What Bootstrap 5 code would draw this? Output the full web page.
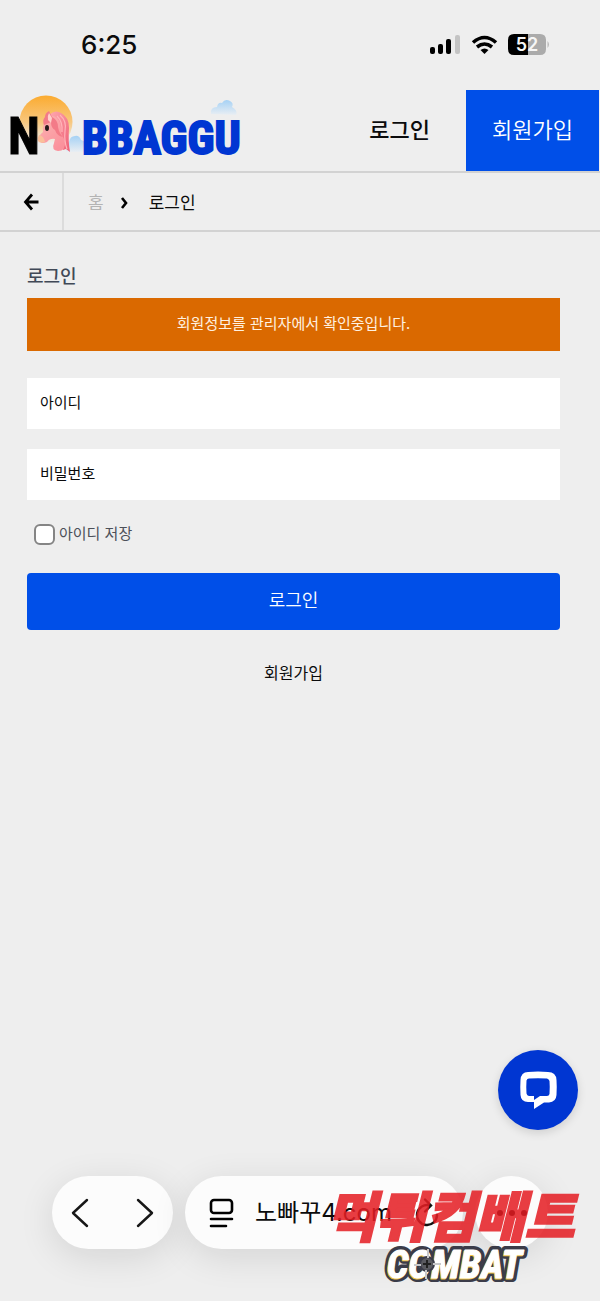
<!DOCTYPE html>
<html lang="ko">
<head>
<meta charset="utf-8">
<meta name="viewport" content="width=device-width, initial-scale=1">
<title>로그인</title>
<link href="https://cdn.jsdelivr.net/npm/bootstrap@5.3.0/dist/css/bootstrap.min.css" rel="stylesheet">
<style>
  :root { --ink: #0b0b0c; --blue: #004fe8; --deep: #0036d2; --line: #d2d2d2; }
  body { background: #eee; color: var(--ink); font-family: "Noto Sans CJK KR", sans-serif; }
  a { color: inherit; text-decoration: none; }
  svg { display: block; overflow: visible; }
  .status-bar { height: 90px; padding: 0 50px 0 81px; }
  .clock { font: 500 26px/32px Inter, sans-serif; }
  .site-head { height: 83px; border-bottom: 2px solid var(--line); padding: 0 1px 0 8px; }
  .head-link, .head-join { font-size: 22px; padding-bottom: 4px; }
  .head-link { font-weight: 500; padding-left: 36px; padding-right: 36px; }
  .head-join { width: 133px; background: var(--blue); color: #fff; font-weight: 350; }
  .crumbs { height: 59px; border-bottom: 2px solid var(--line); font-size: 17px; }
  .crumb-back { width: 64px; border-right: 2px solid #dcdcdc; }
  .crumb-home { color: #b4b4b4; }
  .page-body { padding: 28px 40px 0 27px; }
  .page-title { font-size: 18px; line-height: 30px; font-weight: 500; color: #414957; margin: 0 0 8px; }
  .notice { background: #da6900; color: #fff1e0; font-size: 15px; line-height: 21px; padding: 14px 16px 18px; margin-bottom: 27px; border: 0; border-radius: 0; }
  .field { height: 51px; background: #fff; font-size: 15px; padding: 0 13px 2px; margin-bottom: 20px; }
  .field input { min-width: 0; border: 0; outline: 0; background: none; }
  .field:focus-within { box-shadow: inset 0 0 0 2px var(--blue); }
  .save-row { padding-left: 7px; margin: 22px 0 26px; color: #4c5059; font-size: 15px; line-height: 22px; }
  .save-row label { padding-bottom: 3px; }
  .save-row .form-check-input { width: 21px; height: 21px; border: 2px solid #858585; border-radius: 6px; margin: 0; }
  .btn-login { background: var(--blue); color: #fff; height: 57px; border: 0; border-radius: 4px; font-size: 18px; font-weight: 350; padding: 0 0 4px; }
  .btn-login:hover { background: var(--deep); color: #fff; }
  .join-link { font-size: 16px; line-height: 24px; margin-top: 30px; }
  .bare { border: 0; background: none; padding: 0; }
  .chat-button { width: 80px; height: 80px; background: var(--deep); margin: 0 22px 46px auto; box-shadow: 0 3px 10px #0002; }
  .browser-bar { padding: 0 52px 52px; gap: 12px; }
  .glass { height: 73px; background: #fcfcfc; border-radius: 37px; box-shadow: 0 8px 36px #0000001c; }
  .glass-nav { width: 121px; }
  .glass-more { width: 73px; }
  .address { font: 400 24px/32px Inter, "Noto Sans CJK KR", sans-serif; }
  .stamp { right: 10px; top: 4px; pointer-events: none; }
</style>
</head>
<body>
<div class="d-flex flex-column min-vh-100">
  <div class="status-bar d-flex align-items-center justify-content-between">
    <span class="clock">6:25</span>
    <svg width="120" height="24" viewBox="0 0 120 24" role="img" aria-label="신호, 와이파이, 배터리 52%">
      <rect x="0" y="14" width="5" height="7" rx="2"/><rect x="8" y="11" width="5" height="10" rx="2"/><rect x="16" y="6" width="5" height="15" rx="2"/><rect x="25" y="2" width="5" height="19" rx="2" fill="#c4c4c4"/>
      <g fill="none" stroke="#000" stroke-width="3.6"><path d="M43 9.500q11.500-10 23 0M47 14q7.500-6 15 0"/></g>
      <path d="M50.500 17q4-3 8 0l-4 4z"/>
      <path d="M84 1h14v21H84q-6 0-6-6V7q0-6 6-6z"/><path d="M98 1h12q6 0 6 6v9q0 6-6 6H98z" fill="#ababab"/><path d="M117.500 8q3 3.500 0 7z" fill="#b8b8b8"/>
      <text x="97" y="18" text-anchor="middle" font-family="Inter, sans-serif" font-weight="600" font-size="18" fill="#f6f6f6">52</text>
    </svg>
  </div>

  <header class="site-head d-flex align-items-stretch">
    <a href="#" class="me-auto align-self-center" aria-label="NOBBAGGU">
      <svg width="232" height="72" viewBox="0 0 232 72">
        <defs>
          <linearGradient id="sun" x2="0" y2="1"><stop offset="0" stop-color="#fbab30"/><stop offset=".5" stop-color="#f8c77e"/><stop offset=".9" stop-color="#eee"/></linearGradient>
          <linearGradient id="cloud" x2="0" y2="1"><stop offset="0" stop-color="#a5d1f5"/><stop offset="1" stop-color="#e9eef3"/></linearGradient>
          <linearGradient id="mane" x2="1" y2="1"><stop offset="0" stop-color="#ffa9af"/><stop offset="1" stop-color="#ee5f76"/></linearGradient>
          <linearGradient id="face" x2=".6" y2="1"><stop offset="0" stop-color="#fbb5b2"/><stop offset="1" stop-color="#fb919c"/></linearGradient>
        </defs>
        <circle cx="38" cy="27" r="26.500" fill="url(#sun)"/>
        <path d="M58 57q-1-8 3-10 1-6 6-6 4-1 6 4 7 1 5 12z" fill="url(#cloud)"/>
        <path d="M203 19q-1-7 6-7 1-5 5-4 3-5 8-2 4 2 2 6 6 3 4 8z" fill="url(#cloud)"/>
        <path d="M41 20q6-6 12-2 8 4 8 15-1 13 1 24l-4-3-3 1-3-14-7-16z" fill="url(#mane)"/>
        <path d="M40 23q4-4 9 0 5 5 4 15l4 8q1 10-7 10-7-1-4-8l1-4q-5-1-8 3-7 3-8-3-1-3 4-7-1-9 5-14z" fill="url(#face)"/>
        <path d="M37 22q0-4 4-6l3 6q6 3 6 10 1 6 5 10-6-1-8-7-4-2-4-8l-7 3q-2-5 1-8z" fill="#f37b88"/>
        <path d="M40 25q-1-4 1-7l3 5-1 5z" fill="#ffd0cb"/>
        <path d="M52 20q7 6 5 16-1 10 2 18M49 21q6 6 5 16" fill="none" stroke="#ffb3b8" stroke-width="1.200"/>
        <path d="M31 40q5 1 6 7-5 2-7-1-1-3 1-6z" fill="#fac09a"/>
        <ellipse cx="39" cy="33" rx="2" ry="3" fill="#26191b"/>
        <g font-family="'Roboto Condensed', 'Liberation Sans Narrow', 'Liberation Sans', sans-serif" font-weight="700" paint-order="stroke">
          <text x="0" y="59" font-size="52" fill="#000" stroke="#000" stroke-width="1">N</text>
          <text x="74" y="59" font-size="46" fill="#0036d2" stroke="#0036d2" stroke-width="2">BBAGGU</text>
        </g>
      </svg>
    </a>
    <a href="#" class="head-link d-flex align-items-center">로그인</a>
    <a href="#" class="head-join d-flex align-items-center justify-content-center">회원가입</a>
  </header>

  <nav class="crumbs d-flex align-items-stretch" aria-label="이동 경로">
    <a href="#" class="crumb-back d-flex align-items-center justify-content-center" aria-label="뒤로">
      <svg width="16" height="18" viewBox="0 0 16 18" fill="none" stroke="#000" stroke-width="2.800"><path d="M9 1.500L2.500 9 9 16.500M2.500 9H15.500"/></svg>
    </a>
    <div class="d-flex align-items-center gap-3 ps-4">
      <a href="#" class="crumb-home">홈</a>
      <svg width="9" height="14" viewBox="0 0 9 14" fill="none" stroke="#000" stroke-width="2.600"><path d="M2 3l4 5-4 5"/></svg>
      <span class="ms-1">로그인</span>
    </div>
  </nav>

  <main class="page-body flex-grow-1">
    <h1 class="page-title">로그인</h1>
    <form>
      <div class="notice alert text-center" role="alert">회원정보를 관리자에서 확인중입니다.</div>
      <div class="field d-flex align-items-center gap-2">
        <label for="uid">아이디</label>
        <input class="flex-grow-1" id="uid" type="text">
      </div>
      <div class="field d-flex align-items-center gap-2">
        <label for="upw">비밀번호</label>
        <input class="flex-grow-1" id="upw" type="password">
      </div>
      <div class="save-row d-flex align-items-center gap-1">
        <input class="form-check-input" id="save" type="checkbox">
        <label for="save">아이디 저장</label>
      </div>
      <button class="btn btn-login w-100" type="button">로그인</button>
      <div class="join-link text-center"><a href="#">회원가입</a></div>
    </form>
  </main>

  <button class="bare chat-button rounded-circle d-flex align-items-center justify-content-center" type="button" aria-label="채팅">
    <svg width="38" height="40" viewBox="0 0 38 40"><path fill="#fff" fill-rule="evenodd" d="M9 2Q19 1 29 2q8 0 8.500 8 .5 7 0 15-.5 7-7.500 7.500h-5L15 39v-7H9q-7 0-7.500-7-.5-8 0-15Q2 2 9 2zM10 8.500q-2 0-2.500 2-.5 7 0 13 .5 2 2.500 2.500h5v4l6-4h7q2 0 2.500-2 .5-7 0-13-.5-2-2.500-2.500-9-.5-18 0z"/></svg>
  </button>

  <footer class="browser-bar position-relative d-flex">
    <div class="glass glass-nav d-flex align-items-center justify-content-between px-3">
      <button class="bare" type="button" aria-label="이전"><svg width="24" height="30" viewBox="0 0 24 30" fill="none" stroke="#171717" stroke-width="2.400" stroke-linecap="round" stroke-linejoin="round"><path d="M19 2L5 15l14 13"/></svg></button>
      <button class="bare" type="button" aria-label="다음"><svg width="24" height="30" viewBox="0 0 24 30" fill="none" stroke="#171717" stroke-width="2.400" stroke-linecap="round" stroke-linejoin="round"><path d="M5 2l14 13L5 28"/></svg></button>
    </div>
    <div class="glass flex-grow-1 d-flex align-items-center px-4">
      <svg width="26" height="30" viewBox="0 0 26 30" fill="none" stroke="#000" stroke-width="2.600" stroke-linecap="round"><rect x="2" y="2" width="21" height="13" rx="3"/><path d="M2 21h21M2 28h15"/></svg>
      <span class="address ms-3 ps-1 me-auto">노빠꾸4.com</span>
      <button class="bare" type="button" aria-label="새로고침"><svg width="24" height="30" viewBox="0 0 24 30" fill="none" stroke="#111" stroke-width="2.400" stroke-linecap="round"><path d="M15 7.500A10 10 0 1 0 22 17M10 1.500l6 6-6 6"/></svg></button>
    </div>
    <button class="bare glass glass-more d-flex align-items-center justify-content-center" type="button" aria-label="더보기">
      <svg width="32" height="8" viewBox="0 0 32 8"><circle cx="4" cy="4" r="3"/><circle cx="16" cy="4" r="3"/><circle cx="28" cy="4" r="3"/></svg>
    </button>
    <svg class="stamp position-absolute" width="270" height="110" viewBox="0 0 270 110">
      <g font-style="italic">
        <text x="6" y="57" font-size="54" font-weight="900" font-family="'Noto Sans CJK KR', sans-serif" fill="#e51e24" stroke="#e51e24" stroke-width="2" opacity=".86">먹튀컴배트</text>
        <g font-family="'Roboto Condensed', 'Liberation Sans', sans-serif" font-weight="700" font-size="39" paint-order="stroke" stroke-linejoin="round">
          <text x="67" y="98" fill="#3b3c49" stroke="#3b3c49" stroke-width="8">COMBAT</text>
          <text x="66" y="99" fill="#f2c23b" stroke="#f2c23b" stroke-width="1">COMBAT</text>
          <text x="67" y="98" fill="#fff" stroke="#fff" stroke-width="1">COMBAT</text>
        </g>
      </g>
      <g fill="none" stroke-width="2"><circle cx="107" cy="84" r="7" fill="#5a5a60" stroke="#3b3c49"/><path d="M108 69v9M106 90v9M94 85h7M113 84h8" stroke="#c8c8ca"/><path d="M107 80v8M103 84h8" stroke="#222"/></g>
    </svg>
  </footer>
</div>
<script src="https://cdn.jsdelivr.net/npm/bootstrap@5.3.0/dist/js/bootstrap.bundle.min.js"></script>
</body>
</html>
